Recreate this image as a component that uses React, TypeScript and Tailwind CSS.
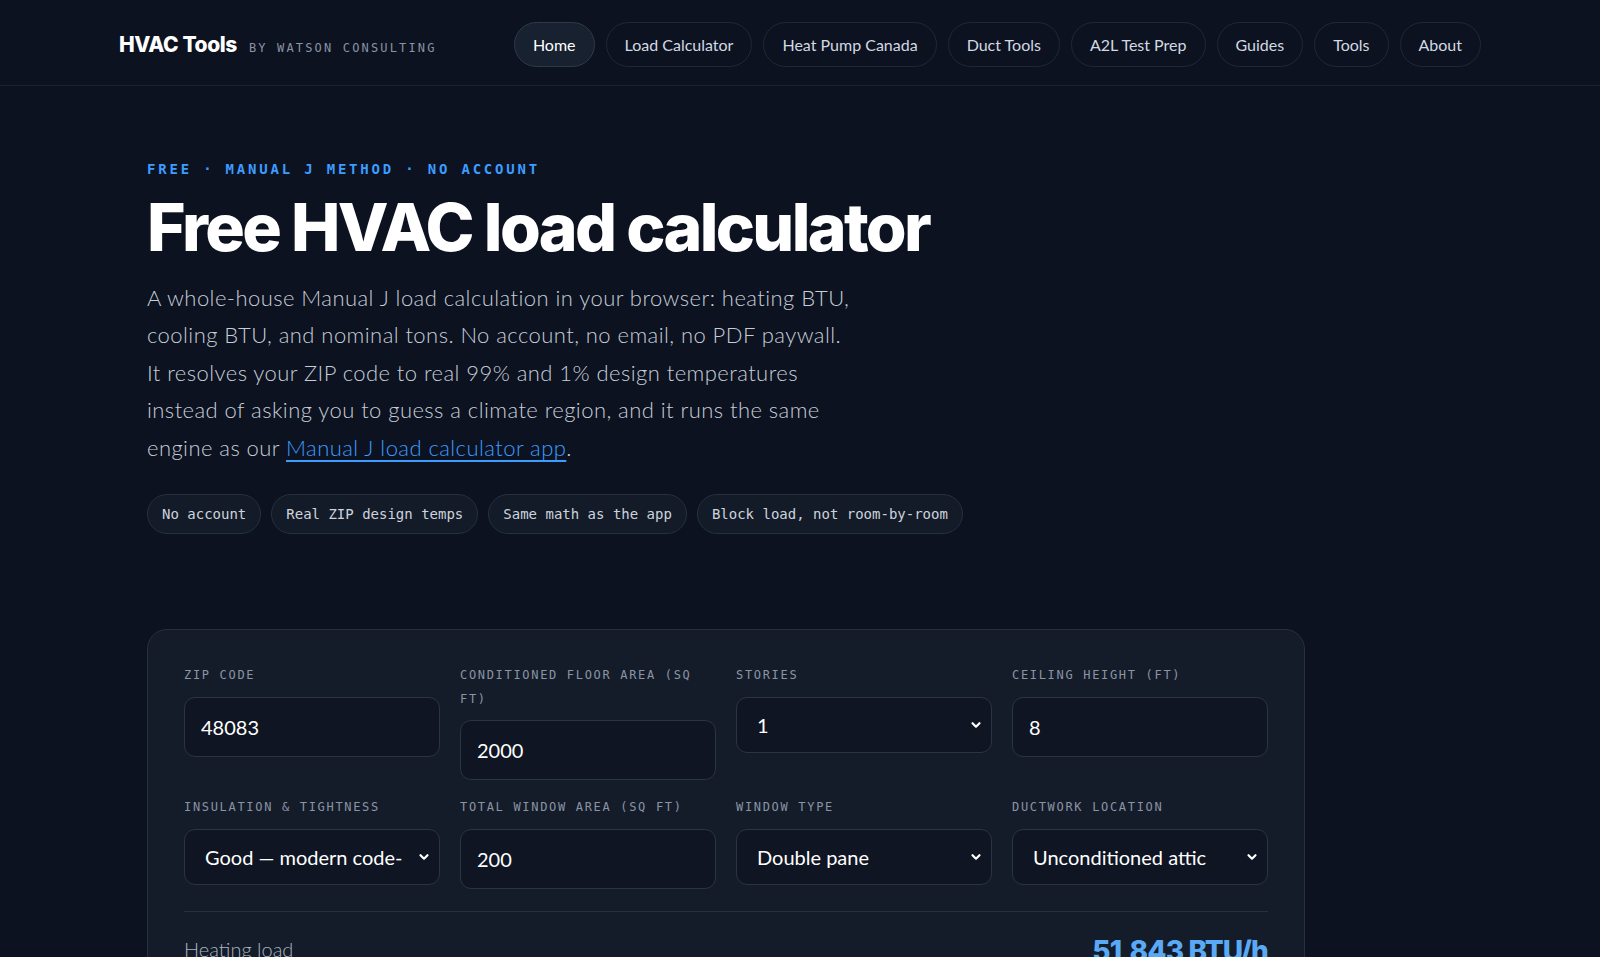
import { useState } from 'react';

const navItems = [
    'Home',
    'Load Calculator',
    'Heat Pump Canada',
    'Duct Tools',
    'A2L Test Prep',
    'Guides',
    'Tools',
    'About',
];

const chips = [
    'No account',
    'Real ZIP design temps',
    'Same math as the app',
    'Block load, not room-by-room',
];

const sans = "font-['Lato','Noto_Sans',sans-serif]";
const mono = "font-['DejaVu_Sans_Mono','Liberation_Mono',monospace]";
const display = "font-['Inter','Noto_Sans',sans-serif]";

function Label({ children }: { children: React.ReactNode }) {
    return (
        <label
            className={`${mono} block text-[12px] leading-[23.5px] tracking-[0.14em] text-[#8a94a4] uppercase mb-[9px]`}
        >
            {children}
        </label>
    );
}

function TextField({ label, value }: { label: string; value: string }) {
    const [v, setV] = useState(value);
    return (
        <div>
            <Label>{label}</Label>
            <input
                value={v}
                onChange={(e) => setV(e.target.value)}
                className={`${sans} w-full h-[60px] px-4 rounded-[11px] border border-[#2a3445] bg-[#0f1522] text-[20px] text-white outline-none`}
            />
        </div>
    );
}

function SelectField({
    label,
    value,
    options,
}: {
    label: string;
    value: string;
    options: string[];
}) {
    const [v, setV] = useState(value);
    return (
        <div>
            <Label>{label}</Label>
            <div className="relative">
                <select
                    value={v}
                    onChange={(e) => setV(e.target.value)}
                    className={`${sans} w-full h-[56px] pl-[20px] pr-[36px] appearance-none rounded-[11px] border border-[#2a3445] bg-[#0f1522] text-[20px] text-white outline-none [color-scheme:dark]`}
                >
                    {options.map((o) => (
                        <option key={o} value={o}>
                            {o}
                        </option>
                    ))}
                </select>
                <svg
                    className="pointer-events-none absolute right-[10px] top-1/2 -translate-y-1/2"
                    width="12"
                    height="12"
                    viewBox="0 0 12 12"
                    fill="none"
                >
                    <path
                        d="M2.5 4.2 6 7.7l3.5-3.5"
                        stroke="#ffffff"
                        strokeWidth="2.2"
                        strokeLinecap="round"
                        strokeLinejoin="round"
                    />
                </svg>
            </div>
        </div>
    );
}

export default function App() {
    return (
        <div className={`${sans} min-h-screen bg-[#0c1220] text-white`}>
            <header className="h-[86px] border-b border-[#1b2331]">
                <div className="mx-auto w-[1362px] h-full pt-[4px] flex items-center justify-between">
                    <div className="flex items-baseline gap-3">
                        <span
                            className={`${display} text-[21px] font-extrabold tracking-[-0.02em] text-white`}
                        >
                            HVAC Tools
                        </span>
                        <span
                            className={`${mono} text-[12px] tracking-[0.18em] text-[#8a93a3]`}
                        >
                            BY WATSON CONSULTING
                        </span>
                    </div>
                    <nav className="flex items-center gap-[11px]">
                        {navItems.map((item) => (
                            <a
                                key={item}
                                href="#"
                                className={
                                    item === 'Home'
                                        ? 'h-[45px] px-[18px] flex items-center rounded-full border border-[#2e394a] bg-[#182130] text-[16px] text-white'
                                        : 'h-[45px] px-[18px] flex items-center rounded-full border border-[#1f2836] text-[16px] text-[#d3d9e2]'
                                }
                            >
                                {item}
                            </a>
                        ))}
                    </nav>
                </div>
            </header>

            <main className="mx-auto w-[1306px] pt-[73px]">
                <p
                    className={`${mono} text-[14px] leading-[20px] font-bold tracking-[0.2em] text-[#3c9cff]`}
                >
                    FREE · MANUAL J METHOD · NO ACCOUNT
                </p>
                <h1
                    className={`${display} mt-[12px] text-[66px] leading-[72px] font-extrabold tracking-[-0.04em] text-white`}
                >
                    Free HVAC load calculator
                </h1>
                <p className="mt-[16px] max-w-[708px] text-[22px] leading-[37.4px] font-light tracking-[0.02em] text-[#c6cdd7]">
                    A whole-house Manual J load calculation in your browser: heating BTU,
                    cooling BTU, and nominal tons. No account, no email, no PDF paywall.
                    It resolves your ZIP code to real 99% and 1% design temperatures
                    instead of asking you to guess a climate region, and it runs the same
                    engine as our{' '}
                    <a href="#" className="text-[#3c9cff] underline underline-offset-4">
                        Manual J load calculator app
                    </a>
                    .
                </p>
                <div className="mt-[28px] flex gap-[10px]">
                    {chips.map((c) => (
                        <span
                            key={c}
                            className={`${mono} h-[40px] px-[14px] flex items-center rounded-full border border-[#253042] bg-[#131b29] text-[14px] text-[#cdd3dc]`}
                        >
                            {c}
                        </span>
                    ))}
                </div>

                <section className="mt-[95px] w-[1158px] rounded-[20px] border border-[#263042] bg-[#141c2a] px-[36px] pt-[34px] pb-6">
                    <div className="grid grid-cols-4 gap-x-5 gap-y-[16px] items-start">
                        <TextField label="ZIP code" value="48083" />
                        <TextField label="Conditioned floor area (sq ft)" value="2000" />
                        <SelectField label="Stories" value="1" options={['1', '2', '3']} />
                        <TextField label="Ceiling height (ft)" value="8" />
                        <SelectField
                            label="Insulation & tightness"
                            value="Good — modern code-built"
                            options={[
                                'Poor — older, leaky',
                                'Average — typical',
                                'Good — modern code-built',
                                'Excellent — tight, high R',
                            ]}
                        />
                        <TextField label="Total window area (sq ft)" value="200" />
                        <SelectField
                            label="Window type"
                            value="Double pane"
                            options={['Single pane', 'Double pane', 'Triple pane']}
                        />
                        <SelectField
                            label="Ductwork location"
                            value="Unconditioned attic"
                            options={[
                                'Conditioned space',
                                'Unconditioned attic',
                                'Basement',
                                'Crawlspace',
                            ]}
                        />
                    </div>
                    <div className="mt-[22px] border-t border-[#263042] pt-[22px] flex items-start justify-between">
                        <span className="text-[20px] font-light text-[#aab3bf]">
                            Heating load
                        </span>
                        <span
                            className={`${display} text-[28px] leading-[34px] font-extrabold tracking-[-0.03em] text-[#5aa9f5]`}
                        >
                            51,843 BTU/h
                        </span>
                    </div>
                </section>
            </main>
        </div>
    );
}
